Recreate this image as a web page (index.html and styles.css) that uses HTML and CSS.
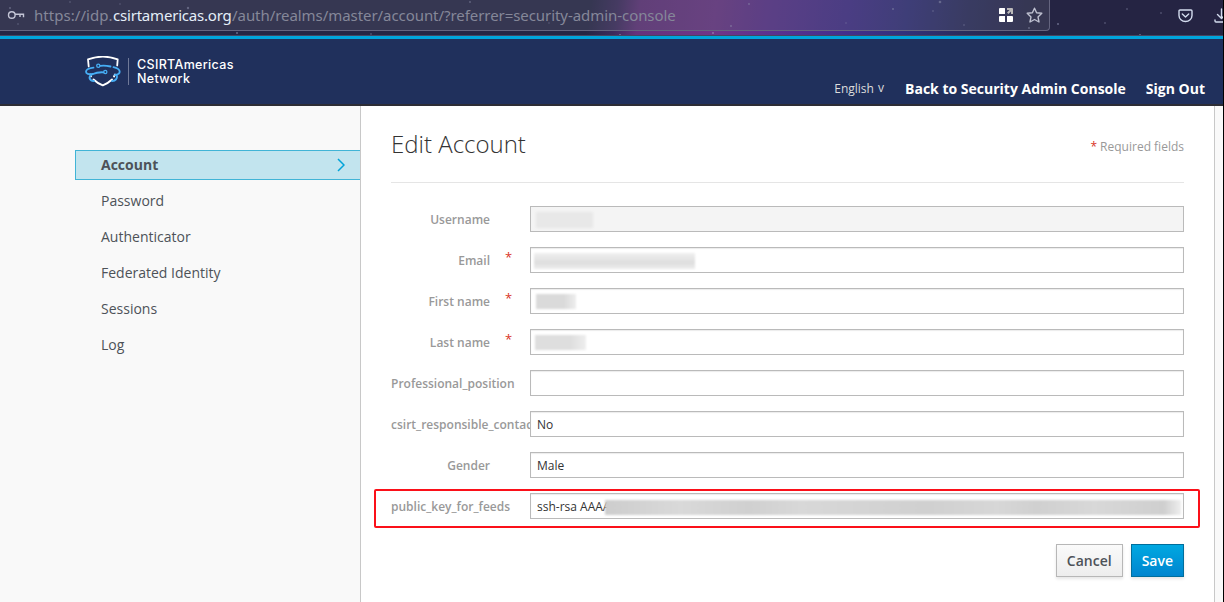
FILE: index.html
```
<!DOCTYPE html>
<html lang="en">
<head>
<meta charset="utf-8">
<title>Edit Account</title>
<link rel="stylesheet" href="styles.css">
</head>
<body>
<div class="window">
  <div class="toolbar">
    <svg class="sky" width="1223" height="36" fill="#a9adcc">
      <g opacity=".5"><circle cx="10" cy="8" r="1"/><circle cx="18" cy="24" r=".8"/><circle cx="70" cy="2" r=".8"/><circle cx="120" cy="4" r=".7"/><circle cx="188" cy="8" r="1.2"/><circle cx="237" cy="33" r="1"/><circle cx="371" cy="34" r=".8"/><circle cx="470" cy="2" r=".9"/><circle cx="549" cy="23" r=".7"/><circle cx="620" cy="35" r="1"/><circle cx="713" cy="33" r="1"/><circle cx="731" cy="26" r="1"/><circle cx="749" cy="4" r=".9"/><circle cx="893" cy="9" r="1"/><circle cx="940" cy="2" r="1.3"/><circle cx="933" cy="11" r=".8"/><circle cx="964" cy="25" r=".8"/><circle cx="846" cy="23" r=".7"/><circle cx="1029" cy="28" r="1"/><circle cx="1058" cy="24" r="1"/><circle cx="1105" cy="23" r=".8"/><circle cx="1140" cy="35" r="1"/><circle cx="1127" cy="9" r=".8"/><circle cx="1161" cy="13" r=".8"/></g>
    </svg>
    <div class="address">
      <svg class="key" width="18" height="12" viewBox="0 0 18 12" fill="none" stroke="#c3c5d6" stroke-width="1.4"><circle cx="4.800" cy="6" r="3.300"/><path d="M8 5.300h8.500v3M13 5.300v2.700"/></svg>
      <div class="url"><span class="scheme">https://idp.</span><span class="host">csirtamericas.org</span><span class="path">/auth/realms/master/account/?referrer=security-admin-console</span></div>
      <svg class="tiles" width="14" height="14" viewBox="0 0 14 14"><path fill="#fff" d="M1 0h4.500q.5 0 .5.5V6H.5Q0 6 0 5.500V1Q0 0 1 0zM0 9q0-1 1-1h5v6H1q-1 0-1-1zM8 8h5q1 0 1 1v4q0 1-1 1H8z"/><path fill="#bbb9b9" d="M8 0h5q1 0 1 1v5h-2V3.500L9.500 6 8 4.500 10.500 2H8z"/></svg>
      <svg class="star" width="17" height="17" viewBox="0 0 17 17" fill="none" stroke="#bfc1d1" stroke-width="1.4" stroke-linejoin="round"><path d="M8.500 1.200 10.600 5.700 15.800 6.300 12 9.900 13 15 8.500 12.500 4 15 5 9.900 1.200 6.300 6.400 5.700z"/></svg>
    </div>
    <div class="tools">
      <svg width="15" height="14" viewBox="0 0 15 14" fill="none" stroke="#d3dcee" stroke-width="1.4" stroke-linecap="round" stroke-linejoin="round"><path d="M2 1h11q1 0 1 1v4.500a6.500 6 0 0 1-13 0V2q0-1 1-1z"/><path d="m4.300 5 3.200 3 3.200-3"/></svg>
      <svg width="15" height="15" viewBox="0 0 15 15" fill="none" stroke="#d3dcee" stroke-width="1.4" stroke-linecap="round" stroke-linejoin="round"><path d="M7.500 1v9M3.500 6.500l4 4 4-4M1 12v1q0 1 1 1h11q1 0 1-1v-1"/></svg>
    </div>
  </div>

  <header class="header">
    <div class="brand">
      <svg width="36" height="32" viewBox="0 0 36 32" fill="none" stroke-linecap="round" stroke-linejoin="round">
        <path stroke="#fff" stroke-width="1.800" d="M3.700 10.500 3 3.300Q18-2 32.700 3.300L32.200 9.500M5.300 18.500 6 20.500M8.500 23.500Q12 27 17.800 29.300 23.500 27 27 23.500M29 20.500l1-2"/>
        <path stroke="#46aef5" stroke-width="1.800" d="M15.500 9.800Q20 9.200 25.500 10.500M8.500 11.700Q1 12.800 1 15.700 1 18.700 8 18M28.500 11.200q6.200 1.600 6.200 4.500 0 2.600-4.700 3.300M18.500 16.300Q12 16 8 18 4 20 4.500 22 5.200 24.800 9 25.200M32 20q.5 4.300-5 5.200"/>
        <circle cx="13.300" cy="9.800" r="1.600" stroke="#46aef5" stroke-width="1.300"/><circle cx="20.300" cy="16" r="1.600" stroke="#46aef5" stroke-width="1.300"/>
      </svg>
      <div class="brand-name"><span>CSIRTAmericas</span><span>Network</span></div>
    </div>
    <nav class="links"><a class="locale">English <small>v</small></a><a>Back to Security Admin Console</a><a>Sign Out</a></nav>
  </header>

  <div class="page">
    <aside class="sidebar">
      <a class="item active">Account<svg width="8" height="14" viewBox="0 0 8 14" fill="none" stroke="#00a3d9" stroke-width="1.500"><path d="m1 1 6 6-6 6"/></svg></a>
      <a class="item">Password</a><a class="item">Authenticator</a><a class="item">Federated Identity</a><a class="item">Sessions</a><a class="item">Log</a>
    </aside>
    <main class="content">
      <div class="title"><h1>Edit Account</h1><p><b>*</b> Required fields</p></div>
      <form class="form">
        <div class="row"><label>Username</label><i></i><div class="input disabled"><span class="smudge user"></span></div></div>
        <div class="row"><label>Email</label><i>*</i><div class="input"><span class="smudge email"></span></div></div>
        <div class="row"><label>First name</label><i>*</i><div class="input"><span class="smudge first"></span></div></div>
        <div class="row"><label>Last name</label><i>*</i><div class="input"><span class="smudge last"></span></div></div>
        <div class="row"><label>Professional_position</label><i></i><div class="input"></div></div>
        <div class="row"><label>csirt_responsible_contact</label><i></i><div class="input">No</div></div>
        <div class="row"><label>Gender</label><i></i><div class="input">Male</div></div>
        <div class="row marked"><label>public_key_for_feeds</label><i></i><div class="input">ssh-rsa AAAA<span class="smudge hash"></span></div></div>
        <div class="actions"><button type="button" class="button">Cancel</button><button type="button" class="button primary">Save</button></div>
      </form>
    </main>
  </div>
</div>
</body>
</html>
```
FILE: styles.css
```
* { box-sizing: border-box; }
body { margin: 0; background: #000; font-family: "Open Sans", sans-serif; font-size: 12px; color: #333; }
.window { width: 1223px; height: 602px; overflow: hidden; display: flex; flex-direction: column; background: #f9f9f9; }

.toolbar { position: relative; flex: none; display: flex; height: 36px; overflow: hidden; border-bottom: 1px solid #454660;
  background: linear-gradient(98deg, #252544 0, #252544 585px, #3c2b5c 612px, #65327d 635px, #6f3589 710px, #5a3190 770px, #442f8d 840px, #32307c 900px, #2a2c5c 960px, #252443 1030px); }
.sky { position: absolute; left: 0; top: 0; }
.address { position: relative; flex: none; display: flex; align-items: center; width: 1050px; height: 31px; padding-left: 7px; border: solid #65657f; border-width: 0 1px 1px 0; border-radius: 0 0 4px 0; background: rgba(90, 92, 112, .32); }
.key { margin-right: 9px; flex: none; }
.url { width: 965px; white-space: nowrap; font: 15px/30px "Noto Sans", sans-serif; color: #858799; }
.url span { display: inline-block; }
.scheme { width: 79px; letter-spacing: .05px; }
.host { width: 119px; color: #e4eef8; letter-spacing: -.2px; }
.path { letter-spacing: -.06px; }
.tiles { margin-right: 13px; flex: none; }
.star { flex: none; }
.tools { display: flex; align-items: center; gap: 21px; height: 31px; margin-left: 128px; position: relative; }
.tools svg { flex: none; }

.header { flex: none; display: flex; justify-content: space-between; height: 70px; padding: 0 18px 0 85px; background: #20305c; border-top: 3px solid #00a4dc; border-bottom: 2px solid #2d2d35; }
.brand { display: flex; align-items: flex-start; padding-top: 17px; }
.brand-name { display: flex; flex-direction: column; margin: 2px 0 0 7px; padding-left: 8px; border-left: 1px solid #6f7998; height: 27px; font: 500 12.5px/14px Inter, sans-serif; color: #fff; letter-spacing: .33px; }
.links { display: flex; align-items: center; gap: 20px; padding-top: 33px; font-size: 14px; font-weight: 700; color: #fff; }
.locale { margin-right: -1px; font-size: 12px; font-weight: 400; color: #ddd; }
.locale small { display: inline-block; width: 9px; padding-left: 1px; font-size: 12px; transform: translateY(-1px); }

.page { flex: 1; display: flex; min-height: 0; }
.sidebar { width: 360px; padding: 44px 0 0 75px; display: flex; flex-direction: column; gap: 6px; }
.item { display: flex; align-items: center; justify-content: space-between; height: 30px; padding: 0 15px 2px 26px; font-size: 14px; color: #4d5258; }
.item.active { font-weight: 700; padding-left: 25px; background: #c2e4ee; border: 1px solid #41b4d6; border-right: 0; }
.item svg { margin-top: 2px; }
.content { width: 855px; padding: 0 30px; background: #fff; border: solid #c8c8c8; border-width: 0 1px; }
.title { display: flex; align-items: center; justify-content: space-between; height: 77px; border-bottom: 1px solid #e5e5e5; }
.title h1 { margin: 0 0 2px; font-size: 24px; font-weight: 300; color: #333; }
.title p { margin: 4px 0 0; color: #999; }
.title b { color: #d9331f; font-weight: 400; }
.form { padding-top: 23px; display: flex; flex-direction: column; gap: 15px; }
.row { position: relative; display: grid; grid-template-columns: 99px 40px 654px; height: 26px; line-height: 26px; }
.row label { padding-top: 1px; height: 26px; text-align: right; font-weight: 600; white-space: nowrap; color: #999; }
.row i { padding-left: 15px; font-style: normal; font-size: 13px; line-height: 20px; color: #d9331f; }
.input { position: relative; height: 26px; padding-left: 6px; line-height: 25px; background: #fff; border: 1px solid #bababa; box-shadow: inset 0 1px 1px rgba(0, 0, 0, .08); }
.disabled { background: #f4f4f4; box-shadow: none; }
.smudge { position: absolute; top: 5px; height: 16px; filter: blur(1px); background: #dedede; }
.user { left: 5px; width: 57px; background: #e8e8e8; }
.email { left: 3px; width: 161px; background: linear-gradient(#f0f0f0, #dedede 60%, #eee); }
.first { left: 5px; width: 40px; height: 15px; background: linear-gradient(90deg, #dadada 70%, #eee); }
.last { left: 4px; width: 51px; height: 15px; background: linear-gradient(90deg, #dedede 70%, #eee); }
.hash { left: 74px; right: 2px; top: 6px; height: 15px; background: linear-gradient(90deg, #cdcdcd, #d9d9d9 13%, #d0d0d0 25%, #d8d8d8 34%, #d0d0d0 56%, #d7d7d7 68%, #d0d0d0 75%, #d8d8d8 85%, #cfcfcf 97%, #eee); }
.marked::after { content: ""; box-sizing: border-box; position: absolute; left: -17px; top: -4px; width: 826px; height: 39px; border: 2px solid #fb1019; border-radius: 2px; }
.actions { display: flex; justify-content: flex-end; gap: 8px; margin-top: 10px; }
.button { height: 33px; padding: 0 10px; font: 600 14px "Open Sans", sans-serif; color: #4d5258; border: 1px solid #b7b7b7; background: linear-gradient(#fafafa, #ededed); box-shadow: 0 2px 3px rgba(0, 0, 0, .1); }
.primary { color: #fff; border-color: #006e9c; background: linear-gradient(#00a8e1, #0085cf); }
```
